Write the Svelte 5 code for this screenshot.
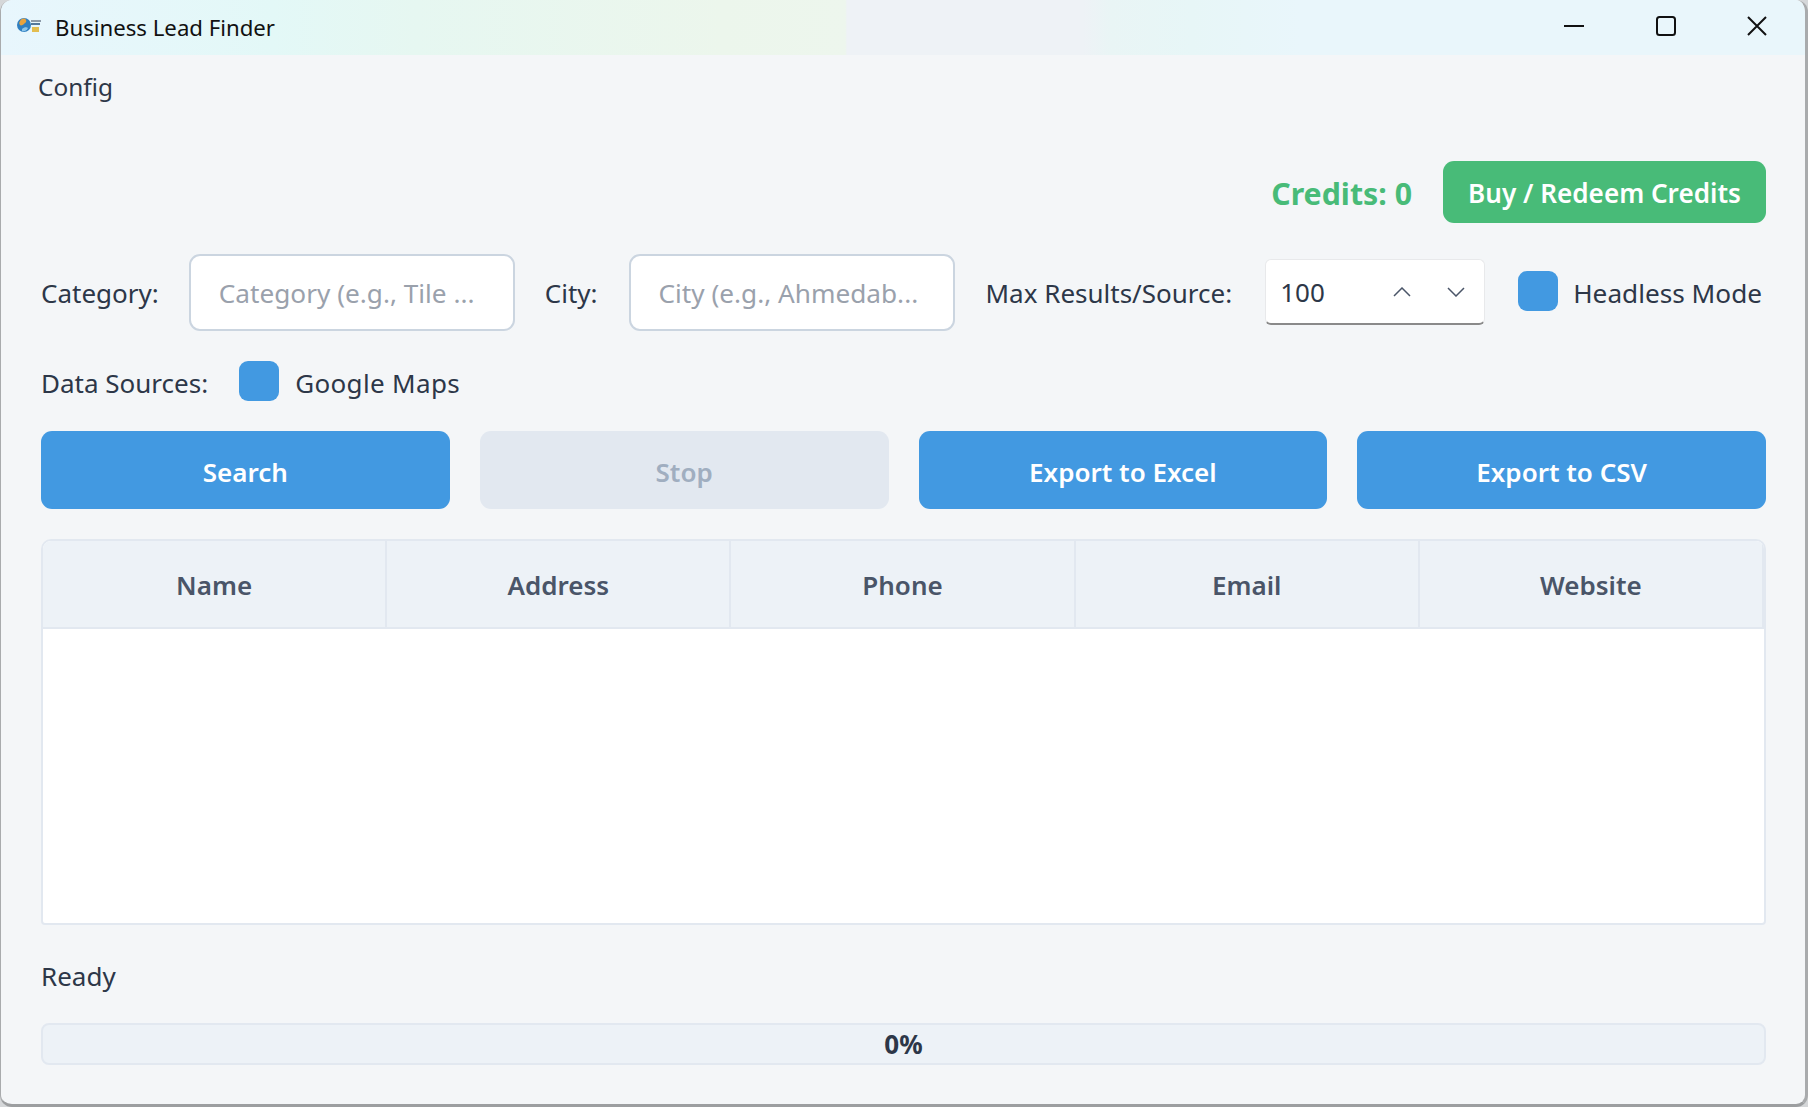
<script lang="ts">
    const columns = ['Name', 'Address', 'Phone', 'Email', 'Website']
    const actions = [
        { label: 'Search', disabled: false },
        { label: 'Stop', disabled: true },
        { label: 'Export to Excel', disabled: false },
        { label: 'Export to CSV', disabled: false }
    ]
    let maxResults = $state(100)
</script>

<div class="window">
    <header class="titlebar">
        <svg class="app-icon" viewBox="0 0 24 16" width="24" height="16">
            <circle cx="7" cy="8" r="7" fill="#2f7fc1" />
            <path d="M3 4c2-3 5-3 6-1s-1 3-2 4-3 2-4 1-1-3 0-4z" fill="#e8a33d" />
            <path d="M5 12c2-2 5-2 6-1-1 2-3 4-6 3z" fill="#8cc5ea" />
            <rect x="14" y="3" width="10" height="2" fill="#8c9aa8" />
            <rect x="14" y="6" width="9" height="2" fill="#55789a" />
            <rect x="15" y="10" width="7" height="5" fill="#e3bd4f" />
        </svg>
        <span class="app-title">Business Lead Finder</span>
        <div class="window-controls">
            <svg viewBox="0 0 20 20" width="20" height="20"><path d="M0 10h20" /></svg>
            <svg viewBox="0 0 20 20" width="20" height="20"><rect x="1" y="1" width="18" height="18" rx="2.5" /></svg>
            <svg viewBox="0 0 20 20" width="20" height="20"><path d="M1 1l18 18M19 1L1 19" /></svg>
        </div>
    </header>

    <nav class="menubar"><span>Config</span></nav>

    <main class="content">
        <div class="credits-row">
            <span class="credits">Credits: 0</span>
            <button class="buy-btn"><span>Buy / Redeem Credits</span></button>
        </div>

        <div class="filter-row">
            <span class="label">Category:</span>
            <input class="text-input" placeholder="Category (e.g., Tile ..." />
            <span class="label">City:</span>
            <input class="text-input" placeholder="City (e.g., Ahmedab..." />
            <span class="label">Max Results/Source:</span>
            <div class="spinbox">
                <span class="spin-value">{maxResults}</span>
                <svg class="chevron" viewBox="0 0 18 10" width="18" height="10"><path d="M1 9l8-8 8 8" /></svg>
                <svg class="chevron" viewBox="0 0 18 10" width="18" height="10"><path d="M1 1l8 8 8-8" /></svg>
            </div>
            <span class="check-box"></span>
            <span class="label headless">Headless Mode</span>
        </div>

        <div class="source-row">
            <span class="label">Data Sources:</span>
            <span class="check-box"></span>
            <span class="label maps">Google Maps</span>
        </div>

        <div class="actions">
            {#each actions as action}
                <button class="action-btn" class:disabled={action.disabled}>{action.label}</button>
            {/each}
        </div>

        <section class="table">
            <div class="table-head">
                {#each columns as column}
                    <div class="th">{column}</div>
                {/each}
            </div>
        </section>

        <div class="status">Ready</div>

        <div class="progress">0%</div>
    </main>
</div>

<style>
    :global(body) {
        margin: 0;
        background: #d5d7d9;
    }

    .window {
        box-sizing: border-box;
        width: 1808px;
        height: 1107px;
        display: flex;
        flex-direction: column;
        background: #f4f6f8;
        border-radius: 12px;
        border-left: 1px solid #a9abad;
        border-right: 3px solid #a9abad;
        border-bottom: 3px solid #9c9ea0;
        overflow: hidden;
        font-family: 'Noto Sans', 'Open Sans', sans-serif;
        color: #2d3748;
    }

    .titlebar {
        height: 55px;
        flex: none;
        display: flex;
        align-items: center;
        padding-left: 16px;
        background: linear-gradient(90deg, #e8f6fd 0%, #e3f8f7 15%, #e6f7f1 23%, #ecf6ec 40%, #edf6ed 46.8%, #eef2f6 46.9%, #eef2f6 60%, #e9f5f5 61.5%, #e7f6f7 66%, #e9f6fb 72%, #e9f6fb 100%);
    }

    .app-icon {
        margin-top: -5px;
        filter: blur(0.4px);
    }

    .app-title {
        margin-left: 14px;
        font-size: 22.2px;
        color: #111;
    }

    .window-controls {
        margin-left: auto;
        margin-right: 38px;
        margin-top: -4px;
        display: flex;
        gap: 71.5px;
    }

    .window-controls svg {
        fill: none;
        stroke: #111;
        stroke-width: 2;
    }

    .menubar {
        flex: none;
        height: 62px;
        padding-left: 37px;
        display: flex;
        align-items: center;
        font-size: 24.4px;
    }

    .content {
        flex: 1;
        padding: 44px 39px 0 40px;
        display: flex;
        flex-direction: column;
    }

    .credits-row {
        display: flex;
        justify-content: flex-end;
        align-items: center;
        gap: 31px;
        height: 62px;
    }

    .credits {
        padding-top: 2px;
        font-size: 30.3px;
        font-weight: 700;
        color: #48bb78;
    }

    .buy-btn {
        height: 62px;
        width: 323px;
        border: none;
        border-radius: 11px;
        padding: 2px 0 0;
        background: #48bb78;
        color: #fff;
        font: 600 26.1px 'Noto Sans', sans-serif;
    }

    .filter-row {
        margin-top: 31px;
        display: flex;
        align-items: center;
        height: 77px;
    }

    .label {
        font-size: 26px;
        white-space: nowrap;
    }

    .headless {
        font-size: 26.2px;
    }

    .text-input {
        box-sizing: border-box;
        width: 326px;
        height: 77px;
        margin: 0 31px;
        padding: 0 28px;
        border: 2px solid #cbd5e0;
        border-radius: 11px;
        background: #fff;
        font: 26.2px 'Noto Sans', sans-serif;
    }

    .text-input:first-of-type {
        margin: 0 30px;
    }

    .text-input::placeholder {
        color: #9aa1ac;
        opacity: 1;
    }

    .spinbox {
        box-sizing: border-box;
        width: 220px;
        height: 66px;
        margin: -1px 33px 0;
        padding: 0 19px 0 14px;
        display: flex;
        align-items: center;
        gap: 36px;
        background: #fff;
        border-radius: 6px;
        border: 1px solid #e8e9eb;
        border-bottom: 2px solid #8a8a8a;
    }

    .spin-value {
        flex: 1;
        font-size: 26px;
    }

    .chevron {
        flex: none;
        fill: none;
        stroke: #4a5568;
        stroke-width: 1.5;
    }

    .check-box {
        flex: none;
        width: 40px;
        height: 40px;
        border-radius: 9px;
        background: #4299e1;
    }

    .filter-row .check-box {
        margin-top: -3px;
        margin-right: 15px;
    }

    .source-row {
        margin-top: 30px;
        height: 40px;
        display: flex;
        align-items: center;
        gap: 16px;
    }

    .source-row .label {
        margin-top: 4px;
    }

    .source-row .check-box {
        margin-left: 15px;
    }

    .maps {
        letter-spacing: 0.35px;
    }

    .actions {
        margin-top: 30px;
        display: grid;
        grid-template-columns: repeat(4, 1fr);
        gap: 30px;
    }

    .action-btn {
        height: 78px;
        border: none;
        border-radius: 11px;
        padding: 3px 0 0;
        background: #4299e1;
        color: #fff;
        font: 600 26px 'Noto Sans', sans-serif;
    }

    .action-btn.disabled {
        background: #e2e8f0;
        color: #a0aec0;
    }

    .table {
        box-sizing: border-box;
        margin-top: 30px;
        height: 386px;
        background: #fff;
        border: 2px solid #e2e8f0;
        border-radius: 10px 10px 4px 4px;
        overflow: hidden;
    }

    .table-head {
        display: grid;
        grid-template-columns: repeat(5, 1fr);
        height: 86px;
        background: #edf2f7;
        border-bottom: 2px solid #e2e8f0;
    }

    .th {
        display: flex;
        align-items: center;
        justify-content: center;
        padding-top: 2px;
        font-size: 26px;
        font-weight: 600;
        color: #4a5568;
        border-right: 2px solid #e2e8f0;
    }

    .status {
        margin-top: 32px;
        font-size: 26px;
        line-height: 38px;
    }

    .progress {
        box-sizing: border-box;
        margin-top: 28px;
        height: 42px;
        display: flex;
        align-items: center;
        justify-content: center;
        background: #edf2f7;
        border: 2px solid #e2e8f0;
        border-radius: 8px;
        font-size: 26px;
        font-weight: 700;
    }
</style>
